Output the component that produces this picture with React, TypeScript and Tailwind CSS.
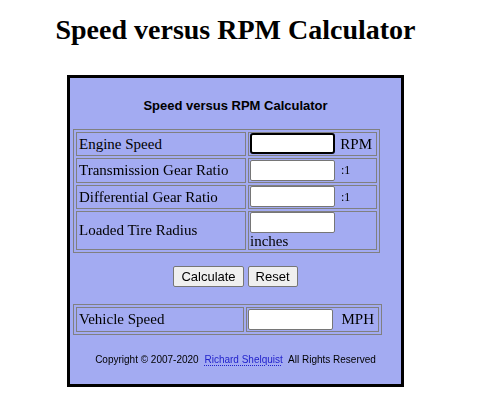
const serif = "font-['Georgia','Liberation_Serif',serif]"
const sans = "font-['Liberation_Sans',Arial,sans-serif]"

function Field({ focused = false }: { focused?: boolean }) {
  return (
    <input
      type="text"
      autoFocus={focused}
      className={`block w-[85px] h-[21px] bg-white border border-[#767676] rounded-[2px] px-1 text-[13px] outline-none ${
        focused ? 'border-2 border-black rounded-[3px]' : ''
      }`}
    />
  )
}

export default function App() {
  return (
    <div className="w-[471px] bg-white text-black flex flex-col items-center">
      <h1 className={`${serif} font-bold text-[28px] leading-none mt-[16px]`}>
        Speed versus RPM Calculator
      </h1>

      {/* Calculator panel */}
      <div className="mt-[31px] w-[337px] h-[312px] border-[3px] border-black bg-[#a3abf2] flex flex-col items-center">
        <div className={`${sans} font-bold text-[13px] mt-[18px]`}>Speed versus RPM Calculator</div>

        <table className={`${serif} text-[15px] mt-[13px] border border-[#808080] border-separate border-spacing-[2px] w-[307px] self-start ml-[3px]`}>
          <tbody>
            <tr>
              <td className="border border-[#808080] px-[2px] h-[24px] w-[170px]">Engine Speed</td>
              <td className="border border-[#808080] px-[1px]">
                <div className="flex items-center justify-between pr-[3px]">
                  <Field focused />
                  <span>RPM</span>
                </div>
              </td>
            </tr>
            <tr>
              <td className="border border-[#808080] px-[2px] h-[24px]">Transmission Gear Ratio</td>
              <td className="border border-[#808080] px-[1px]">
                <div className="flex items-center gap-[6px]">
                  <Field />
                  <span className="text-[12px]">:1</span>
                </div>
              </td>
            </tr>
            <tr>
              <td className="border border-[#808080] px-[2px] h-[24px]">Differential Gear Ratio</td>
              <td className="border border-[#808080] px-[1px]">
                <div className="flex items-center gap-[6px]">
                  <Field />
                  <span className="text-[12px]">:1</span>
                </div>
              </td>
            </tr>
            <tr>
              <td className="border border-[#808080] px-[2px]">Loaded Tire Radius</td>
              <td className="border border-[#808080] px-[1px]">
                <Field />
                <div className="leading-[16px]">inches</div>
              </td>
            </tr>
          </tbody>
        </table>

        <div className={`${sans} flex gap-[4px] mt-[13px] text-[13px]`}>
          <button className="h-[21px] px-[7px] bg-[#efefef] border border-[#767676] rounded-[2px]">Calculate</button>
          <button className="h-[21px] px-[7px] bg-[#efefef] border border-[#767676] rounded-[2px]">Reset</button>
        </div>

        <table className={`${serif} text-[15px] mt-[17px] border border-[#808080] border-separate border-spacing-[2px] w-[309px] self-start ml-[3px]`}>
          <tbody>
            <tr>
              <td className="border border-[#808080] px-[2px] h-[21px] w-[168px]">Vehicle Speed</td>
              <td className="border border-[#808080] px-[1px]">
                <div className="flex items-center justify-between pr-[3px]">
                  <Field />
                  <span>MPH</span>
                </div>
              </td>
            </tr>
          </tbody>
        </table>

        <p className={`${sans} text-[10px] mt-[17px]`}>
          Copyright © 2007-2020{' '}
          <a href="#" className="text-[#2222cc] underline decoration-dotted underline-offset-2 mx-[3px]">
            Richard Shelquist
          </a>{' '}
          All Rights Reserved
        </p>
      </div>
    </div>
  )
}
